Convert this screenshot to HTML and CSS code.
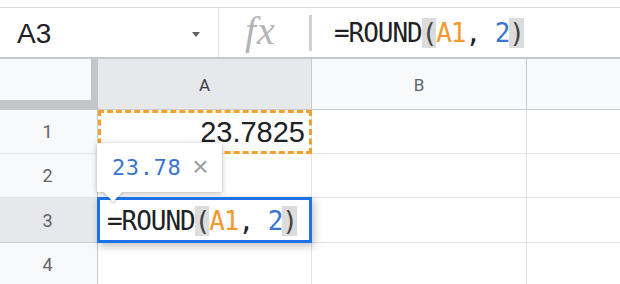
FILE: index.html
```html
<!DOCTYPE html>
<html lang="en">
<head>
    <meta charset="UTF-8">
    <meta name="viewport" content="width=device-width, initial-scale=1.0">
    <title>Sheet</title>
    <link rel="stylesheet" href="styles.css">
</head>
<body>
    <div class="top-strip"></div>

    <div class="formula-bar">
        <div class="name-box">
            <span class="name-text">A3</span>
            <span class="name-arrow"></span>
        </div>
        <div class="fx-box">
            <span class="fx">fx</span>
        </div>
        <div class="formula-text formula">=ROUND<span class="paren">(</span><span class="ref">A1</span>, <span class="num">2</span><span class="paren">)</span></div>
    </div>

    <div class="grid">
        <div class="corner"><div class="corner-inner"></div></div>
        <div class="col-head selected">A</div>
        <div class="col-head">B</div>
        <div class="col-head last"></div>

        <div class="row-head">1</div>
        <div class="cell num-cell">
            23.7825
            <div class="copy-mark"></div>
        </div>
        <div class="cell"></div>
        <div class="cell last"></div>

        <div class="row-head">2</div>
        <div class="cell"></div>
        <div class="cell"></div>
        <div class="cell last"></div>

        <div class="row-head selected">3</div>
        <div class="cell editing">
            <div class="editor formula">=ROUND<span class="paren">(</span><span class="ref">A1</span>, <span class="num">2</span><span class="paren">)</span></div>
            <div class="preview">
                <span class="preview-value">23.78</span>
                <span class="preview-close">&times;</span>
            </div>
        </div>
        <div class="cell"></div>
        <div class="cell last"></div>

        <div class="row-head">4</div>
        <div class="cell"></div>
        <div class="cell"></div>
        <div class="cell last"></div>
    </div>
</body>
</html>
```

FILE: styles.css
```css
* {
    margin: 0;
    padding: 0;
    box-sizing: border-box;
}

body {
    width: 620px;
    height: 284px;
    overflow: hidden;
    background-color: #fff;
    font-family: 'Liberation Sans', Arial, sans-serif;
    color: #202124;
}

.top-strip {
    height: 8px;
    border-bottom: 1px solid #dadce0;
}

/* formula bar */

.formula-bar {
    height: 51px;
    display: flex;
    align-items: center;
    border-bottom: 2px solid #c7c7c7;
}

.name-box {
    width: 219px;
    height: 100%;
    display: flex;
    align-items: center;
    justify-content: space-between;
    padding: 0 18px 0 17px;
    border-right: 1px solid #e3e3e3;
}

.name-text {
    font-size: 28px;
    color: #202124;
    padding-top: 2px;
}

.name-arrow {
    width: 0;
    height: 0;
    border-left: 4px solid transparent;
    border-right: 4px solid transparent;
    border-top: 5px solid #5f6368;
    margin-top: 4px;
}

.fx-box {
    width: 93px;
    height: 36px;
    display: flex;
    align-items: center;
    padding-left: 26px;
    border-right: 3px solid #d0d0d0;
}

.fx {
    font-family: 'Liberation Serif', serif;
    font-style: italic;
    font-size: 40px;
    color: #b4b4b4;
    letter-spacing: 1px;
    margin-top: -4px;
}

.formula {
    font-family: 'DejaVu Sans Mono', 'Liberation Mono', monospace;
    font-size: 26px;
    letter-spacing: -1.05px;
    color: #202124;
    white-space: pre;
}

.formula-text {
    padding-left: 22px;
    padding-top: 1px;
}

.paren {
    background-color: #dcdcdc;
    color: #444;
}

.ref {
    color: #f29a2e;
}

.num {
    color: #3a74d1;
}

/* grid */

.grid {
    display: grid;
    grid-template-columns: 98px 214px 215px 1fr;
    grid-template-rows: 51px 44px 44px 45px 44px;
}

.corner {
    background-color: #c4c5c7;
}

.corner-inner {
    width: 91px;
    height: 41px;
    background-color: #f8f9fa;
}

.col-head {
    background-color: #f8f9fa;
    border-right: 1px solid #c9cacc;
    border-bottom: 1px solid #c9cacc;
    display: flex;
    align-items: center;
    justify-content: center;
    font-family: Roboto, 'Liberation Sans', sans-serif;
    font-size: 17px;
    color: #5f6368;
    padding-top: 2px;
}

.col-head.selected {
    background-color: #e6e8eb;
    color: #3c4043;
}

.col-head.last,
.cell.last {
    border-right: none;
}

.row-head {
    background-color: #f8f9fa;
    border-right: 1px solid #c9cacc;
    border-bottom: 1px solid #e2e3e3;
    display: flex;
    align-items: center;
    justify-content: center;
    font-family: Roboto, 'Liberation Sans', sans-serif;
    font-size: 18px;
    color: #5f6368;
    padding-right: 2px;
}

.row-head.selected {
    background-color: #e6e8eb;
    border-bottom-color: #c9cacc;
    color: #5f6368;
}

.cell {
    position: relative;
    border-right: 1px solid #e2e3e3;
    border-bottom: 1px solid #e2e3e3;
}

.num-cell {
    display: flex;
    align-items: center;
    justify-content: flex-end;
    padding-right: 6px;
    padding-top: 2px;
    font-size: 29px;
    color: #202124;
}

.copy-mark {
    position: absolute;
    top: 0;
    left: 0;
    right: -1px;
    bottom: -1px;
    border: 3px dashed #f2a12e;
}

.cell.editing {
    z-index: 2;
}

.editor {
    position: absolute;
    top: -1px;
    left: -1px;
    right: -1px;
    bottom: -1px;
    border: 3px solid #1a73e8;
    background-color: #fff;
    box-shadow: 2px 3px 8px rgba(0, 0, 0, 0.25);
    padding-left: 7px;
    display: flex;
    align-items: center;
    padding-top: 1px;
}

/* value preview */

.preview {
    position: absolute;
    top: -55px;
    left: -1px;
    width: 125px;
    height: 49px;
    background-color: #fff;
    box-shadow: 0 1px 5px rgba(0, 0, 0, 0.3);
    display: flex;
    align-items: center;
    padding-left: 15px;
    gap: 11px;
}

.preview::after {
    content: "";
    position: absolute;
    left: 6px;
    bottom: -10px;
    width: 0;
    height: 0;
    border-left: 10px solid transparent;
    border-right: 10px solid transparent;
    border-top: 11px solid #fff;
    filter: drop-shadow(0 2px 1px rgba(0, 0, 0, 0.15));
}

.preview-value {
    font-family: 'DejaVu Sans Mono', 'Liberation Mono', monospace;
    font-size: 22px;
    letter-spacing: 0.6px;
    color: #3a74d1;
}

.preview-close {
    font-size: 28px;
    color: #9aa0a6;
    margin-top: -2px;
}
```
